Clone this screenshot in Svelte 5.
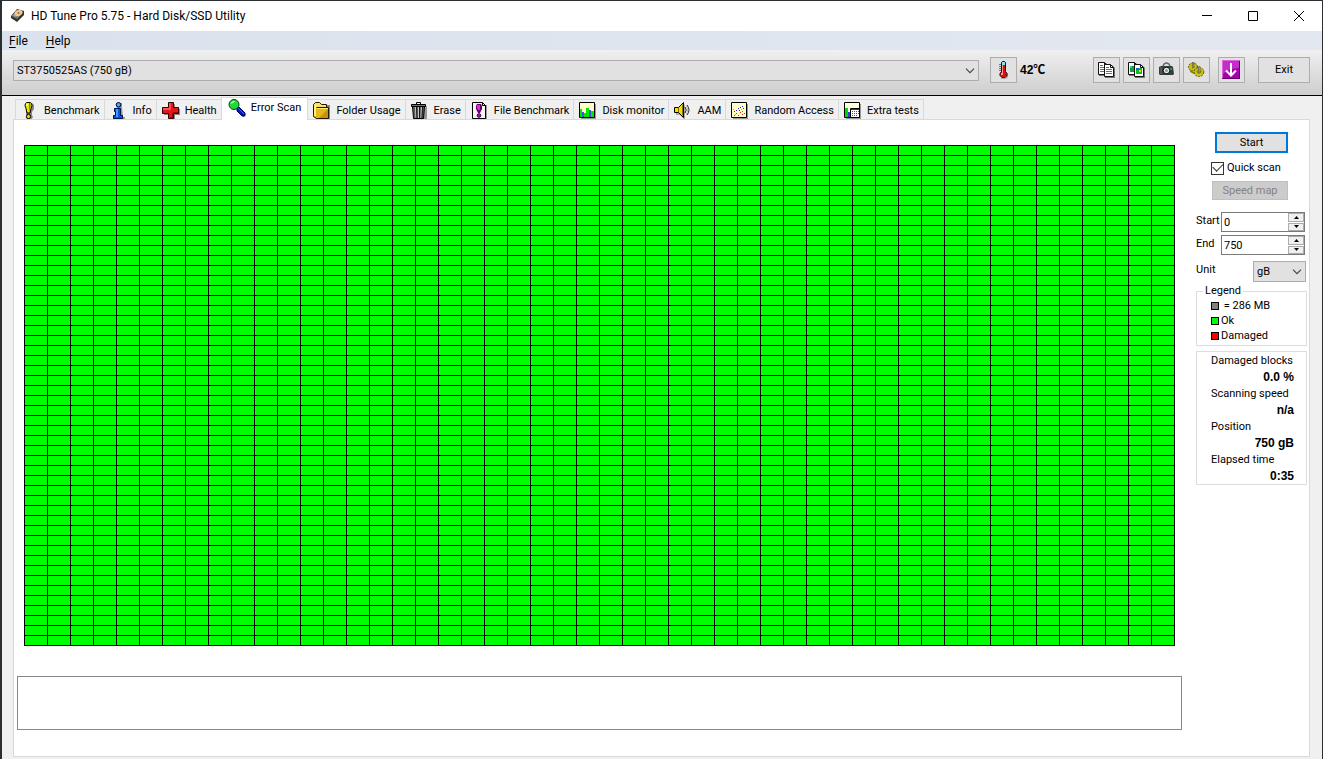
<script>
  const tabs = [
    { id: 'benchmark', label: 'Benchmark' },
    { id: 'info', label: 'Info' },
    { id: 'health', label: 'Health' },
    { id: 'scan', label: 'Error Scan' },
    { id: 'folder', label: 'Folder Usage' },
    { id: 'erase', label: 'Erase' },
    { id: 'file', label: 'File Benchmark' },
    { id: 'monitor', label: 'Disk monitor' },
    { id: 'aam', label: 'AAM' },
    { id: 'random', label: 'Random Access' },
    { id: 'extra', label: 'Extra tests' }
  ];
  const columns = 50;
  const rows = 50;
  const blocks = Array.from({ length: columns * rows }, (_, i) => i);
  const stats = [
    { name: 'Damaged blocks', value: '0.0 %' },
    { name: 'Scanning speed', value: 'n/a' },
    { name: 'Position', value: '750 gB' },
    { name: 'Elapsed time', value: '0:35' }
  ];

  let active = $state('scan');
  let quick = $state(true);
  let range = $state({ start: 0, end: 750 });
  const fields = [
    { key: 'start', label: 'Start' },
    { key: 'end', label: 'End' }
  ];

  function step(key, by) {
    range[key] = Math.min(750, Math.max(0, Number(range[key]) + by));
  }
</script>

{#snippet chevron()}
  <svg class="chevron" width="10" height="6" viewBox="0 0 10 6" aria-hidden="true">
    <path d="M1 .7l4 4 4-4" fill="none" stroke="#444" stroke-width="1.1" />
  </svg>
{/snippet}

{#snippet page(x, y)}
  <path d="M{x + 1} {y + 1}h7l3 3v10h-10z" fill="#777" />
  <path d="M{x + 0.5} {y + 0.5}h6l3 3v9h-9z" fill="#fff" stroke="#111" />
  <path d="M{x + 6.5} {y + 0.5}v3h3" fill="none" stroke="#111" />
{/snippet}

{#snippet tabIcon(id)}
  <svg width="18" height="18" viewBox="0 0 18 18" aria-hidden="true">
    {#if id === 'benchmark'}
      <path d="M5 1h6l2 2v4l-2 3v3l1 2-2 3H6l-1-3z" fill="#888" />
      <path d="M4.500 1.500l1-1h4l1 1 .5 2-1 3-1 4.500h-3l-1-4.500-1-3z" fill="#e8e800" stroke="#000" />
      <path d="M8 1h1.500v4L8 10z" fill="#8a8a00" />
      <path d="M5.500 2h1.500v2h-1.500z" fill="#ffffa0" />
      <circle cx="7.500" cy="14.500" r="2.100" fill="#e8e800" stroke="#000" />
    {:else if id === 'info'}
      <path d="M7 1h5v4l1 10h2v2H5v-2h2z" fill="#999" />
      <circle cx="8.500" cy="2.800" r="2.300" fill="#20b8ff" stroke="#003" />
      <path d="M4.500 6.500h6v7h2v3h-9v-3h2v-4h-1z" fill="#0850f0" stroke="#001040" />
      <path d="M6 7h2v8H6z" fill="#30a8ff" />
    {:else if id === 'health'}
      <path d="M7 2h6v5h5v6h-5v5H7v-5H2V7h5z" fill="#888" />
      <path d="M6.500.5h5v5h5v6h-5v5h-5v-5h-6v-6h6z" fill="#e01818" stroke="#300" />
      <path d="M7 1h2v5H7zM1 6h8v2H1z" fill="#ff5050" />
      <path d="M10 11h1v5h-3v-1h2zM11 10h5v1h-5z" fill="#a00000" />
    {:else if id === 'scan'}
      <path d="M10 12l2-2 6 6-1 2h-2z" fill="#999" />
      <path d="M9 10l2-2 6 6v2l-1 1h-2l-5-5z" fill="#0018c8" stroke="#000060" />
      <path d="M10.500 9.500l5.500 5.500" stroke="#3868ff" />
      <circle cx="6" cy="5.500" r="5" fill="#20d838" stroke="#064010" />
      <path d="M2.500 5l1-2 2-1h2L5 4z" fill="#b0ffb0" />
    {:else if id === 'folder'}
      <path d="M2 3h15v14H3z" fill="#888" />
      <path d="M.5 14.500v-12l2-2h4l2 2h5v3h-9v9.500z" fill="#ffe060" stroke="#201800" />
      <path d="M3.500 5.500h12v11h-12l-3-2" fill="#e8b818" stroke="#201800" />
      <path d="M1 3h2v11H1z" fill="#fff080" />
      <path d="M4 6h11v1H4z" fill="#fff080" />
      <path d="M15 7v9H6z" fill="#c89010" />
    {:else if id === 'erase'}
      <path d="M4 4h12v13H5z" fill="#999" />
      <path d="M1.500 4.500h12l-1 12h-10z" fill="#606060" stroke="#000" />
      <path d="M4.500 5l.5 11M7.500 5v11M10.500 5L10 16" stroke="#c8c8c8" />
      <path d="M5.500 5l.5 11M8.500 5v11M11.500 5L11 16" stroke="#181818" />
      <path d="M.5 2.500h14v2H.5z" fill="#777" stroke="#000" />
      <path d="M5.500 2.500v-2h4v2" fill="none" stroke="#000" />
    {:else if id === 'file'}
      <path d="M3 3h13v15H3z" fill="#999" />
      <path d="M1.500.5h10l3 3v13h-13z" fill="#f4f4f4" stroke="#000" />
      <path d="M11.500.5v3h3" fill="none" stroke="#000" />
      <path d="M6 2h4l1 2v3l-2 4H7L5 7V4z" fill="#600060" />
      <path d="M6 3h3v5H7L6 6z" fill="#f020f0" />
      <circle cx="8" cy="13.500" r="1.800" fill="#d000d0" stroke="#300030" />
    {:else if id === 'monitor' || id === 'random'}
      <path d="M2 2h15v15H2z" fill="#999" />
      <path d="M.5.5h15v15H.5z" fill="#ffffc8" stroke="#000" />
      {#if id === 'monitor'}
        <path d="M1 7h2v8H1zM5 11h2v4H5zM7 6h3v9H7zM12 9h3v6h-3z" fill="#00e800" />
        <path d="M3 10h2v5H3zM10 8h2v7h-2z" fill="#4050e0" />
      {:else}
        <path d="M11 4h1v1h-1zM9 5h1v1H9zM12 6h1v1h-1zM7 6h1v1H7zM5 8h1v1H5zM3 9h1v1H3zM8 8h1v1H8z" fill="#2020e0" />
        <path d="M3 13h1v1H3zM5 11h1v1H5zM7 13h1v1H7zM9 10h1v1H9zM11 9h1v1h-1zM13 11h1v1h-1zM11 12h1v1h-1z" fill="#f02020" />
        <path d="M2 7h1v1H2zM4 12h1v1H4zM10 7h1v1h-1z" fill="#e0a000" />
      {/if}
    {:else if id === 'aam'}
      <path d="M2 7h4l5-5v16l-5-5H2z" fill="#aaa" />
      <path d="M.5 5.500h4l5-5v15l-5-5h-4z" fill="#f0e000" stroke="#000" />
      <path d="M8 3v10l1 1V2z" fill="#907800" />
      <path d="M4.500 6v4" stroke="#806800" />
      <path d="M11 5q2.500 3 0 6M13 3q4 5 0 10" fill="none" stroke="#222" />
      <path d="M12 4q3.500 4 0 8" fill="none" stroke="#bbb" />
    {:else}
      <path d="M2 2h15v15H2z" fill="#999" />
      <path d="M.5.5h15v15H.5z" fill="#ffffe0" stroke="#000" />
      <path d="M1 6h3v9H1z" fill="#00d800" />
      <path d="M4 10h2v5H4z" fill="#3040e0" />
      <path d="M6.500 6.500h9v9h-9z" fill="#fff" stroke="#000" />
      <path d="M7 7h8v1H7z" fill="#2030c0" />
      <path d="M8 9h1v1H8zM12 9h1v1h-1zM10 11h1v1h-1zM14 11h1v1h-1zM8 13h1v1H8zM12 13h1v1h-1z" fill="#e02020" />
      <path d="M10 9h1v1h-1zM14 9h1v1h-1zM8 11h1v1H8zM12 11h1v1h-1zM10 13h1v1h-1z" fill="#3050e0" />
    {/if}
  </svg>
{/snippet}

<div class="window">
  <header class="titlebar">
    <svg width="16" height="16" viewBox="0 0 16 16" aria-hidden="true">
      <path d="M1 8l6-7 7 2v4l-7 7-6-4z" fill="#333" />
      <path d="M2 8l5-6 6 2-6 7z" fill="#a8a098" />
      <ellipse cx="8.500" cy="5" rx="4" ry="3" transform="rotate(-25 8.500 5)" fill="#f0c890" />
      <circle cx="8.500" cy="5" r="1" fill="#a06030" />
      <path d="M3 8l3 1 2-1-1 3-4-2z" fill="#665" />
    </svg>
    <h1>HD Tune Pro 5.75 - Hard Disk/SSD Utility</h1>
    <div class="controls">
      <button aria-label="Minimize"><svg width="10" height="10" viewBox="0 0 10 10"><path d="M0 4.500h10" stroke="#000" /></svg></button>
      <button aria-label="Maximize"><svg width="10" height="10" viewBox="0 0 10 10"><path d="M.5.5h9v9h-9z" fill="none" stroke="#000" /></svg></button>
      <button aria-label="Close"><svg width="10" height="10" viewBox="0 0 10 10"><path d="M0 0l10 10M10 0L0 10" stroke="#000" /></svg></button>
    </div>
  </header>

  <nav class="menubar">
    <button><u>F</u>ile</button>
    <button><u>H</u>elp</button>
  </nav>

  <div class="toolbar">
    <div class="picker drive">
      <select aria-label="Drive"><option>ST3750525AS (750 gB)</option></select>
      {@render chevron()}
    </div>
    <div class="temperature">
      <button class="tool" aria-label="Temperature">
        <svg width="18" height="18" viewBox="0 0 18 18">
          <path d="M8 3h4v8l2 2v3l-2 2H7z" fill="#aaa" />
          <path d="M7.500 1.500l1-1h2l1 1v9l1.500 2v2l-2 2h-3l-2-2v-2l1.500-2z" fill="#e01010" stroke="#300" />
          <path d="M8 1h3v3H8z" fill="#80e8f0" />
          <path d="M8 4h1v8H8zM7 12h2v2H7z" fill="#ff9090" />
          <path d="M5 3.500h2M5 5.500h2M5 7.500h2M5 9.500h2" stroke="#777" />
        </svg>
      </button>
      <strong>42℃</strong>
    </div>
    <div class="tools">
      <button class="tool" aria-label="Copy text">
        <svg width="18" height="18" viewBox="0 0 18 18">
          {@render page(1, 1)}
          <path d="M3 4.500h3M3 6.500h5M3 8.500h5M3 10.500h5" stroke="#0a80ff" />
          {@render page(7, 3)}
          <path d="M9 6.500h3M9 8.500h6M9 10.500h6M9 12.500h6" stroke="#0a80ff" />
        </svg>
      </button>
      <button class="tool" aria-label="Copy picture">
        <svg width="18" height="18" viewBox="0 0 18 18">
          {@render page(1, 1)}
          <path d="M3 5h5v6H3z" fill="#18a030" /><path d="M3 5h2v2H3z" fill="#20c8e0" />
          {@render page(7, 3)}
          <path d="M9 7h6v6H9z" fill="#10c020" /><path d="M9 7h3v2H9z" fill="#2060d0" /><path d="M12 9h2v2h-2z" fill="#e0d020" />
        </svg>
      </button>
      <button class="tool" aria-label="Save screenshot">
        <svg width="18" height="18" viewBox="0 0 18 18">
          <path d="M6 5l1-2 2-1h1l2 1 1 2" fill="none" stroke="#666" stroke-width="1.500" />
          <path d="M2 6l2-1h11l1 1 1 7-1 1H3l-1-1z" fill="#383c3c" />
          <path d="M3 6h2v7H3z" fill="#555" />
          <circle cx="9.500" cy="9.500" r="3.300" fill="#e0e8e8" stroke="#111" />
          <circle cx="9.500" cy="9.500" r="1.500" fill="#999" />
          <path d="M13 7h2v2h-2z" fill="#18b038" />
        </svg>
      </button>
      <button class="tool" aria-label="Options">
        <svg width="18" height="18" viewBox="0 0 18 18">
          <ellipse cx="6" cy="6" rx="4.500" ry="4" fill="#c8bc10" stroke="#5c5400" stroke-dasharray="2 1" />
          <path d="M5.500 7V1.500h1.500V7z" fill="#999" stroke="#444" stroke-width=".5" />
          <path d="M3 9l4 2v2l-4-2z" fill="#8a8000" />
          <ellipse cx="12" cy="11" rx="4.800" ry="4.500" fill="#d0c410" stroke="#5c5400" stroke-dasharray="2 1" />
          <ellipse cx="12" cy="10.500" rx="2.500" ry="2.200" fill="#9c9000" />
          <path d="M11.500 12V5.500h1.500V12z" fill="#aaa" stroke="#444" stroke-width=".5" />
        </svg>
      </button>
    </div>
    <button class="tool minimize" aria-label="Minimize to tray">
      <svg width="20" height="20" viewBox="0 0 20 20">
        <path d="M1 0h18v19H1z" fill="#a800b0" />
        <path d="M1 0h18v1H2v18H1z" fill="#e060e0" />
        <path d="M18 1h1v18H1v-1h17z" fill="#600068" />
        <path d="M2 1h16v7Q8 8 2 14z" fill="#c030c8" />
        <path d="M10 3v12M5 10.500l5 5 5-5" fill="none" stroke="#fff" stroke-width="2" />
      </svg>
    </button>
    <button class="exit">Exit</button>
  </div>

  <main>
    <div class="tabs" role="tablist">
      {#each tabs as tab (tab.id)}
        <button role="tab" class:active={active === tab.id} aria-selected={active === tab.id} onclick={() => (active = tab.id)}>
          {@render tabIcon(tab.id)}{tab.label}
        </button>
      {/each}
    </div>

    <section class="panel">
      <div class="work">
        <div class="blocks" role="img" aria-label="Scanned blocks">
          {#each blocks as block (block)}<i></i>{/each}
        </div>
        <textarea class="log" aria-label="Log" readonly></textarea>
      </div>

      <aside>
        <button class="start">Start</button>
        <label class="check">
          <input type="checkbox" bind:checked={quick} />
          Quick scan
        </label>
        <button class="speed" disabled>Speed map</button>

        <div class="fields">
          {#each fields as field (field.key)}
            <div class="field">
              <label for={field.key}>{field.label}</label>
              <div class="spin">
                <input id={field.key} type="text" inputmode="numeric" bind:value={range[field.key]} />
                <div class="arrows">
                  <button aria-label="Increase {field.label}" onclick={() => step(field.key, 1)}>
                    <svg width="5" height="3" viewBox="0 0 5 3"><path d="M0 3l2.500-3L5 3z" /></svg>
                  </button>
                  <button aria-label="Decrease {field.label}" onclick={() => step(field.key, -1)}>
                    <svg width="5" height="3" viewBox="0 0 5 3"><path d="M0 0l2.500 3L5 0z" /></svg>
                  </button>
                </div>
              </div>
            </div>
          {/each}
        </div>
        <div class="unit">
          <label for="unit">Unit</label>
          <div class="picker">
            <select id="unit"><option>gB</option><option>mB</option></select>
            {@render chevron()}
          </div>
        </div>

        <fieldset class="legend">
          <legend>Legend</legend>
          <ul>
            <li><span class="swatch size"></span>&nbsp;= 286 MB</li>
            <li><span class="swatch ok"></span>Ok</li>
            <li><span class="swatch damaged"></span>Damaged</li>
          </ul>
        </fieldset>

        <dl>
          {#each stats as stat (stat.name)}
            <dt>{stat.name}</dt>
            <dd>{stat.value}</dd>
          {/each}
        </dl>
      </aside>
    </section>
  </main>
</div>

<style>
  :global(body) {
    margin: 0;
  }
  .window {
    box-sizing: border-box;
    min-height: 100vh;
    display: flex;
    flex-direction: column;
    border: solid #2b2f33;
    border-width: 1px 1px 0 2px;
    background: #f0f0f0;
    color: #000;
    font: 11px/14px Roboto, "Liberation Sans", sans-serif;
  }
  .window * {
    box-sizing: border-box;
  }
  button,
  input,
  select {
    margin: 0;
    padding: 0;
    border: 0;
    border-radius: 0;
    font: inherit;
    color: inherit;
  }
  button {
    background: none;
  }
  svg {
    display: block;
    flex: none;
  }

  .titlebar {
    display: flex;
    align-items: center;
    height: 30px;
    padding-left: 8px;
    gap: 5px;
    background: #fff;
  }
  h1 {
    flex: 1;
    margin: 0;
    font: 12px/16px Roboto, "Open Sans", sans-serif;
  }
  .controls {
    display: flex;
    height: 100%;
  }
  .controls button {
    display: grid;
    place-items: center;
    width: 46px;
  }

  .menubar {
    display: flex;
    height: 19px;
    padding-left: 7px;
    gap: 18px;
    background: linear-gradient(90deg, #dae2ed, #e3e8f0);
  }
  .menubar button {
    padding-top: 2px;
    font: 12px/17px Roboto, "Open Sans", sans-serif;
  }
  u {
    text-underline-offset: 2px;
  }

  .toolbar {
    display: flex;
    align-items: center;
    height: 46px;
    padding: 0 12px 5px 11px;
    border-bottom: 1px solid #000;
    background: linear-gradient(#f0f0f0, #cdcdcd);
  }
  .picker {
    position: relative;
  }
  .picker select {
    display: block;
    width: 100%;
    height: 21px;
    padding: 1px 20px 0 3px;
    border: 1px solid #adadad;
    background: #e1e1e1;
    appearance: none;
  }
  .chevron {
    position: absolute;
    right: 4px;
    top: 8px;
    pointer-events: none;
  }
  .drive {
    flex: 1;
    margin-right: 11px;
  }
  .tool,
  .exit {
    height: 26px;
    border: 1px solid #adadad;
    background: #e1e1e1;
  }
  .tool {
    display: flex;
    align-items: center;
    width: 27px;
    padding-left: 3px;
  }
  .temperature {
    display: flex;
    align-items: center;
    gap: 3px;
    width: 103px;
  }
  strong {
    font: bold 12px/14px "Liberation Sans", "Noto Sans CJK SC", sans-serif;
  }
  .tools {
    display: flex;
    gap: 3px;
  }
  .minimize {
    margin: 0 13px 0 8px;
    padding-left: 2px;
  }
  .exit {
    width: 52px;
  }

  main {
    flex: 1;
    display: flex;
    flex-direction: column;
    padding: 1px 12px 2px 11px;
  }
  .tabs {
    display: flex;
    align-items: flex-end;
    padding-left: 2px;
  }
  .tabs button {
    display: flex;
    align-items: center;
    gap: 5px;
    height: 20px;
    padding: 2px 4px 0 5px;
    border: 1px solid #d9d9d9;
    border-width: 1px 1px 0 0;
    white-space: nowrap;
  }
  .tabs button:first-child {
    border-left-width: 1px;
  }
  .tabs .active {
    height: 23px;
    margin: 0 0 -1px -1px;
    padding: 0 6px 2px;
    border-left-width: 1px;
    background: #fff;
    z-index: 1;
  }
  .panel {
    flex: 1;
    display: flex;
    gap: 14px;
    padding: 0 2px 0 3px;
    border: 1px solid #d9d9d9;
    background: #fff;
  }
  .work {
    flex: 1;
    display: flex;
    flex-direction: column;
    gap: 30px;
    padding: 25px 0 26px;
  }
  .blocks {
    display: grid;
    grid-template-columns: repeat(50, 1fr);
    grid-auto-rows: 9px;
    gap: 1px;
    margin: 0 7px;
    padding: 1px;
    background: #000;
  }
  .blocks i {
    background: #0f0;
  }
  .log {
    display: block;
    flex: 1;
    width: 100%;
    min-height: 54px;
    margin: 0;
    border: 1px solid #828790;
    border-radius: 0;
    background: #fff;
    resize: none;
  }

  aside {
    width: 111px;
    padding-top: 12px;
    display: flex;
    flex-direction: column;
  }
  .start {
    height: 21px;
    margin: 0 19px;
    padding-top: 1px;
    border: 2px solid #0078d7;
    background: #e1e1e1;
  }
  .check {
    display: flex;
    align-items: center;
    gap: 3px;
    margin: 8px 0 6px 15px;
  }
  .check input {
    appearance: none;
    width: 13px;
    height: 13px;
    border: 1px solid #333;
    background: #fff;
    display: grid;
    place-items: center;
  }
  .check input:checked::before {
    content: "";
    width: 9px;
    height: 5px;
    border: solid #333;
    border-width: 0 0 1px 1px;
    transform: translateY(-2px) rotate(-45deg);
  }
  .speed {
    height: 19px;
    margin: 0 19px 0 16px;
    padding-top: 1px;
    border: 1px solid #bfbfbf;
    background: #ccc;
    color: #838383;
  }
  .fields {
    display: grid;
    gap: 3px;
    margin: 12px 2px 6px 0;
  }
  .field,
  .unit {
    display: flex;
    justify-content: space-between;
  }
  .field label,
  .unit label {
    padding-top: 2px;
  }
  .spin {
    display: flex;
    width: 84px;
    height: 20px;
    border: 1px solid #7a7a7a;
  }
  .spin input {
    flex: 1;
    min-width: 0;
    padding: 1px 0 0 2px;
    background: #fff;
  }
  .arrows {
    display: grid;
    grid-template-rows: 1fr 1fr;
    width: 16px;
    gap: 1px;
  }
  .arrows button {
    display: grid;
    place-items: center;
    border: 1px solid #acacac;
    background: #f0f0f0;
  }
  .unit {
    margin-right: 1px;
  }
  .unit .picker {
    width: 53px;
  }
  .unit select {
    padding-right: 0;
  }

  .legend {
    margin: 2px 0 5px;
    padding: 0 0 2px 14px;
    border: 1px solid #dcdcdc;
  }
  legend {
    margin-left: -8px;
    padding: 0 2px;
  }
  ul {
    margin: 0;
    padding: 0;
    list-style: none;
  }
  li {
    display: flex;
    align-items: center;
    gap: 2px;
    height: 15px;
  }
  .swatch {
    width: 8px;
    height: 8px;
    border: 1px solid #000;
  }
  .size {
    background: #808080;
  }
  .ok {
    background: #0f0;
  }
  .damaged {
    background: #f00;
  }
  dl {
    margin: 0;
    padding: 0 12px 0 14px;
    border: 1px solid #dcdcdc;
  }
  dt {
    line-height: 17px;
  }
  dd {
    margin: 0;
    text-align: right;
    font: bold 12px/16px "Liberation Sans", Arial, sans-serif;
  }
</style>
